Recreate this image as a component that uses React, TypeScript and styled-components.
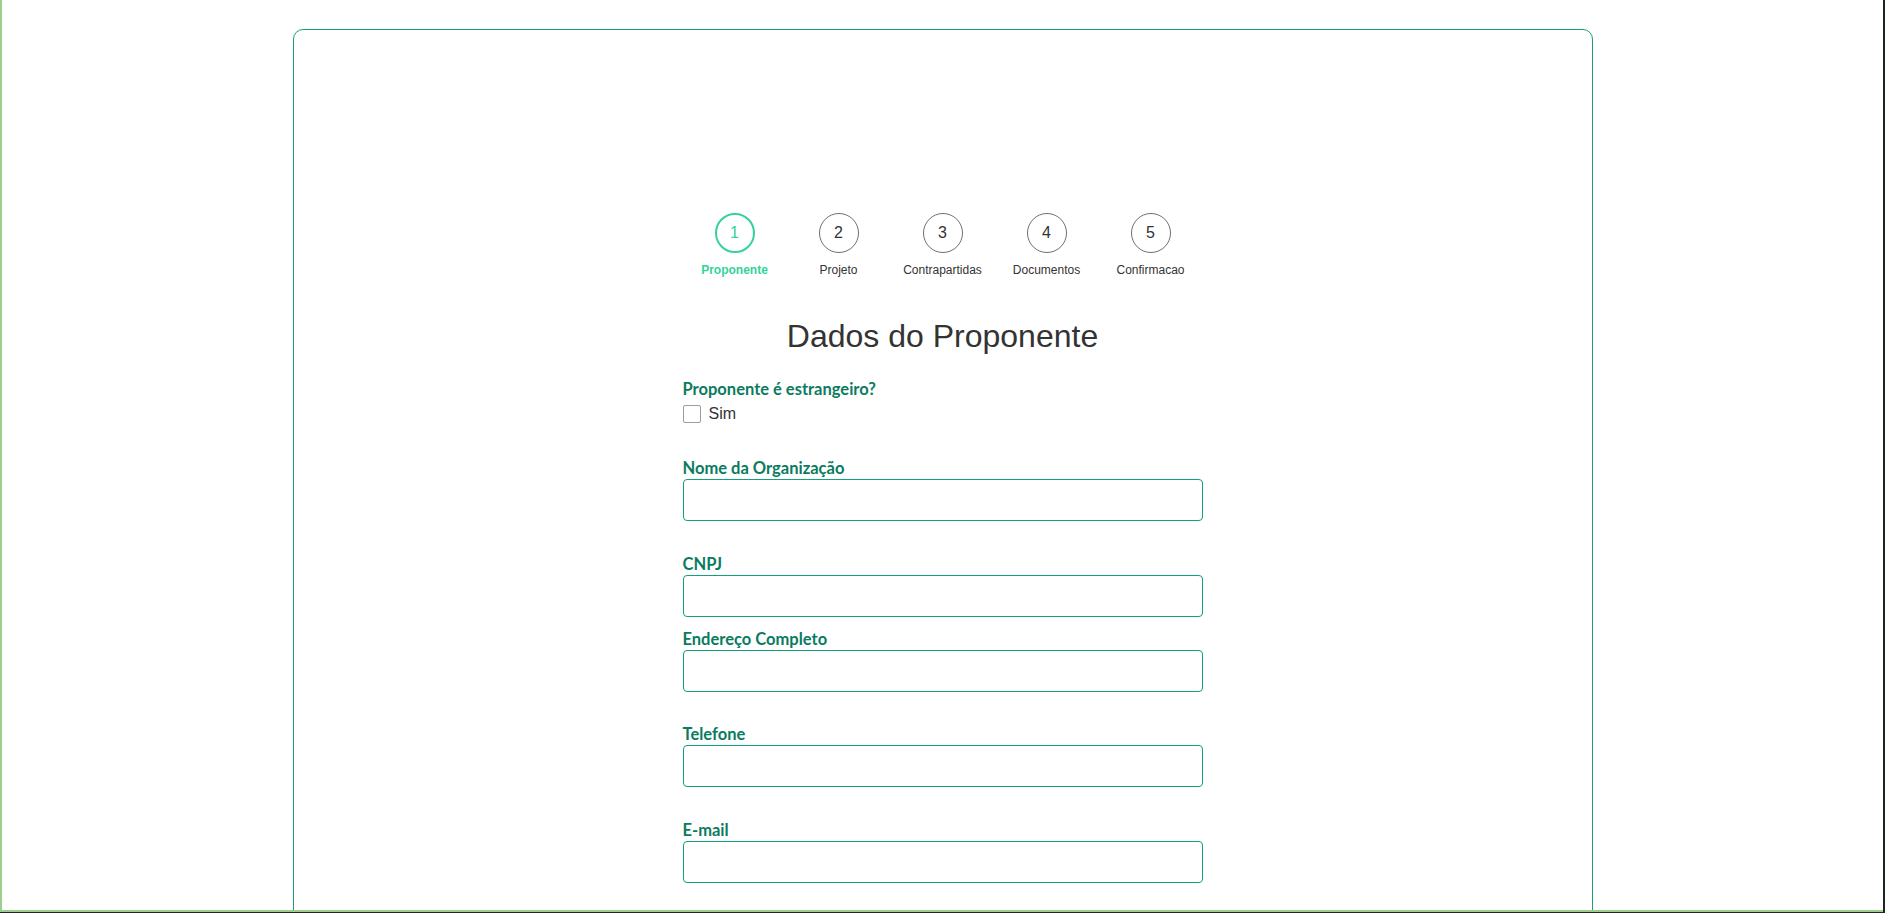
import React from "react";
import styled, { createGlobalStyle } from "styled-components";

const GlobalStyle = createGlobalStyle`
  html, body {
    margin: 0;
    padding: 0;
    height: 100%;
    overflow: hidden;
  }
  body {
    background: #1c2622;
    font-family: "Liberation Sans", Arial, sans-serif;
  }
  * { box-sizing: border-box; }
`;

const Frame = styled.div`
  width: calc(100% - 2px);
  height: calc(100vh - 1px);
  background: #ffffff;
  border-left: 2px solid #9ccf8b;
  border-bottom: 2px solid #9ccf8b;
  overflow: hidden;
  padding-top: 29px;
`;

const Card = styled.main`
  width: 1300px;
  margin: 0 auto;
  border: 1px solid #1a9e7e;
  border-radius: 10px;
  padding: 183px 0 60px;
  min-height: 1200px;
`;

const Stepper = styled.ol`
  list-style: none;
  margin: 0;
  padding: 0;
  display: flex;
  justify-content: center;
`;

const Step = styled.li`
  width: 104px;
  display: flex;
  flex-direction: column;
  align-items: center;
`;

const Circle = styled.div<{ $active?: boolean }>`
  width: 40px;
  height: 40px;
  border-radius: 50%;
  border: ${(p) => (p.$active ? "2px solid #34d399" : "1px solid #6f6f6f")};
  color: ${(p) => (p.$active ? "#34d399" : "#333333")};
  display: flex;
  align-items: center;
  justify-content: center;
  font-size: 16px;
  font-family: "Liberation Sans", Arial, sans-serif;
`;

const StepLabel = styled.span<{ $active?: boolean }>`
  margin-top: 10px;
  font-size: 12px;
  line-height: 14px;
  white-space: nowrap;
  color: ${(p) => (p.$active ? "#34d399" : "#333333")};
  font-weight: ${(p) => (p.$active ? 700 : 400)};
`;

const Title = styled.h1`
  margin: 41px 0 0;
  text-align: center;
  font-size: 32px;
  font-weight: 400;
  color: #333333;
  font-family: "Liberation Sans", Arial, sans-serif;
`;

const Form = styled.form`
  width: 520px;
  margin: 24px auto 0;
  display: flex;
  flex-direction: column;
`;

const Field = styled.div<{ $extra?: number }>`
  display: flex;
  flex-direction: column;
  margin-bottom: ${(p) => 12 + (p.$extra ?? 0)}px;
`;

const Label = styled.label`
  font-family: Lato, "Open Sans", sans-serif;
  font-weight: 700;
  font-size: 16.5px;
  line-height: 20px;
  color: #0a7b5f;
  margin-bottom: 1px;
`;

const CheckRow = styled.label`
  display: flex;
  align-items: center;
  margin-top: 5px;
  gap: 8px;
  font-size: 16px;
  color: #333333;
  font-family: "Liberation Sans", Arial, sans-serif;
`;

const Checkbox = styled.input`
  appearance: none;
  margin: 0;
  width: 18px;
  height: 18px;
  border: 1px solid #9d9d9d;
  border-radius: 2px;
  background: #fff;
`;

const Input = styled.input`
  width: 100%;
  height: 42px;
  border: 1px solid #12a07e;
  border-radius: 4px;
  padding: 0 12px;
  font-size: 16px;
  background: #fff;
  outline: none;
`;

const steps = ["Proponente", "Projeto", "Contrapartidas", "Documentos", "Confirmacao"];

const fields: { label: string; extra: number; type?: string }[] = [
  { label: "Nome da Organização", extra: 20.5 },
  { label: "CNPJ", extra: 0 },
  { label: "Endereço Completo", extra: 20.5 },
  { label: "Telefone", extra: 20.5 },
  { label: "E-mail", extra: 20.5, type: "email" },
];

export default function App() {
  return (
    <>
      <GlobalStyle />
      <Frame>
        <Card>
          <Stepper>
            {steps.map((s, i) => (
              <Step key={s}>
                <Circle $active={i === 0}>{i + 1}</Circle>
                <StepLabel $active={i === 0}>{s}</StepLabel>
              </Step>
            ))}
          </Stepper>
          <Title>Dados do Proponente</Title>
          <Form onSubmit={(e) => e.preventDefault()}>
            <Field $extra={23}>
              <Label as="span">Proponente é estrangeiro?</Label>
              <CheckRow>
                <Checkbox type="checkbox" />
                Sim
              </CheckRow>
            </Field>
            {fields.map((f) => (
              <Field key={f.label} $extra={f.extra}>
                <Label>{f.label}</Label>
                <Input type={f.type ?? "text"} />
              </Field>
            ))}
          </Form>
        </Card>
      </Frame>
    </>
  );
}
